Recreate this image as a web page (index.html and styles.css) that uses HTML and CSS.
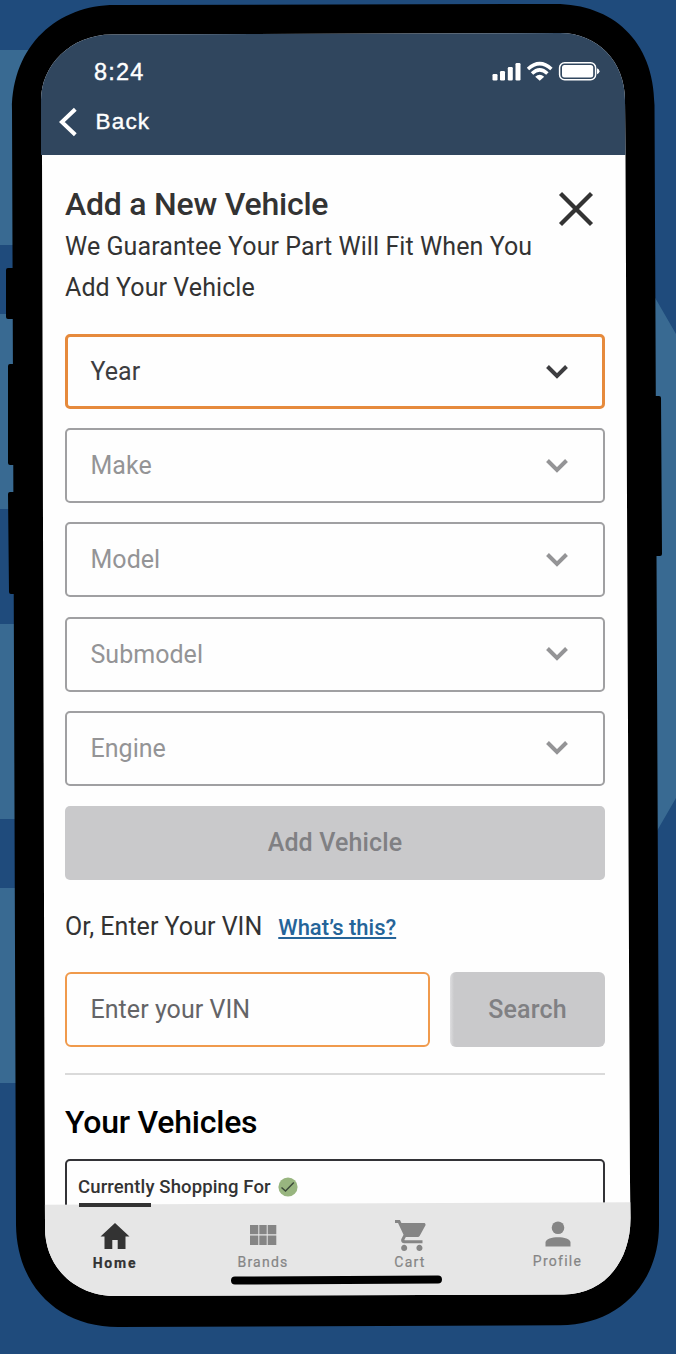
FILE: index.html
```html
<!DOCTYPE html>
<html lang="en">
<head>
<meta charset="utf-8">
<title>Add a New Vehicle</title>
<link rel="stylesheet" href="styles.css">
</head>
<body>
<svg class="backdrop" width="676" height="1354" viewBox="0 0 676 1354" aria-hidden="true">
  <rect width="676" height="1354" fill="#1f4b7c"/>
  <path fill="#396a92" d="M0 50H30V245H0zM0 314H30V509H0zM0 624H30V819H0zM0 888H30V1083H0zM650 289L676 334V798L650 843z"/>
  <path d="M115 5L555 4C612 4 654 40 654.500 105L659 1120V1225C659 1284 618 1325 560 1325.300L118 1327C60 1327 17 1288 16 1225L12 110C12 45 58 5 115 5z"/>
  <path d="M14 268H8q-2 0-2 2V317q0 2 2 2H14zM15 364H10q-2 0-2 2V463q0 2 2 2H16zM16 492H10q-2 0-2 2L9 592q0 2 2 2H17zM650 396H659q2 0 2 2L662 554q0 2-2 2H650z"/>
</svg>

<div class="screen">
  <header class="topbar">
    <div class="status">
      <span class="time">8:24</span>
      <svg width="110" height="22" viewBox="0 0 110 22" fill="#fff">
        <rect x="1.500" y="14" width="5" height="6.500" rx="1.200"/>
        <rect x="9" y="11" width="5" height="9.500" rx="1.200"/>
        <rect x="16.800" y="7" width="5" height="13.500" rx="1.200"/>
        <rect x="24.500" y="3" width="5" height="17.500" rx="1.200"/>
        <g fill="none" stroke="#fff" stroke-width="3.500">
          <path d="M37 9Q48.700-1.800 60.400 9"/>
          <path d="M41 13.600Q48.700 6.200 56.400 13.600"/>
        </g>
        <path d="M44.200 16.800Q48.700 12.800 53.200 16.800L48.700 20.700z"/>
        <rect x="68.600" y="2.700" width="36" height="17" rx="5" fill="none" stroke="#fff" stroke-width="1.500"/>
        <rect x="71" y="5.100" width="31.200" height="12.300" rx="2.500"/>
        <path d="M106 8.300q2.500 1 2.500 3t-2.500 3z"/>
      </svg>
    </div>
    <div class="back">
      <svg width="18" height="30" viewBox="0 0 18 30" fill="none" stroke="#fff" stroke-width="4"><path d="M16.300 2.200L2.800 15L16.300 27.800"/></svg>
      <span>Back</span>
    </div>
  </header>

  <main class="content">
    <div class="heading">
      <div>
        <h1>Add a New Vehicle</h1>
        <p>We Guarantee Your Part Will Fit When You<br>Add Your Vehicle</p>
      </div>
      <svg class="close" width="36" height="36" viewBox="0 0 36 36" fill="none" stroke="#333" stroke-width="4.300"><path d="M2.500 2.500L33.500 33.500M33.500 2.500L2.500 33.500"/></svg>
    </div>

    <div class="fields">
      <div class="select active"><span>Year</span><svg class="chevron" viewBox="0 0 22 14"><path d="M1.500 1.500L11 11L20.500 1.500"/></svg></div>
      <div class="select"><span>Make</span><svg class="chevron" viewBox="0 0 22 14"><path d="M1.500 1.500L11 11L20.500 1.500"/></svg></div>
      <div class="select"><span>Model</span><svg class="chevron" viewBox="0 0 22 14"><path d="M1.500 1.500L11 11L20.500 1.500"/></svg></div>
      <div class="select"><span>Submodel</span><svg class="chevron" viewBox="0 0 22 14"><path d="M1.500 1.500L11 11L20.500 1.500"/></svg></div>
      <div class="select"><span>Engine</span><svg class="chevron" viewBox="0 0 22 14"><path d="M1.500 1.500L11 11L20.500 1.500"/></svg></div>
      <div class="button add"><span>Add Vehicle</span></div>
    </div>

    <div class="vin-label"><span>Or, Enter Your VIN</span><a>What’s this?</a></div>
    <div class="vin-row">
      <div class="vin-input"><span>Enter your VIN</span></div>
      <div class="button search"><span>Search</span></div>
    </div>

    <h2><span>Your Vehicles</span></h2>
    <div class="card">
      <span>Currently Shopping For</span>
      <svg width="20" height="20" viewBox="0 0 20 20"><circle cx="10" cy="10" r="9.600" fill="#98b57f"/><path d="M3.500 10.500L7.500 14L15.800 5.500" fill="none" stroke="#3c4a3a" stroke-width="1.500"/></svg>
    </div>
  </main>

  <nav class="tabs">
    <div class="tab home">
      <svg width="30" height="28" viewBox="0 0 30 28" fill="#333"><path d="M15 1L29.500 14.500H25.500V27H17.700V18H12.300V27H4.500V14.500H.500z"/></svg>
      <span>Home</span>
    </div>
    <div class="tab brands">
      <svg width="28" height="22" viewBox="0 0 28 22" fill="#858585"><path d="M1 1H9.300V10.200H1zM10.300 1H17.700V10.200H10.300zM18.700 1H27.300V10.200H18.700zM1 11.500H9.300V21H1zM10.300 11.500H17.700V21H10.300zM18.700 11.500H27.300V21H18.700z"/></svg>
      <span>Brands</span>
    </div>
    <div class="tab cart">
      <svg width="31" height="31" viewBox="1 2 20.300 20" preserveAspectRatio="none" fill="#858585"><path d="M7 18c-1.100 0-1.990.9-1.990 2S5.900 22 7 22s2-.9 2-2-.9-2-2-2zM1 2v2h2l3.600 7.590-1.350 2.450c-.16.280-.250.610-.250.960 0 1.100.9 2 2 2h12v-2H7.420c-.140 0-.250-.110-.250-.250l.030-.120.900-1.630h7.450c.750 0 1.410-.410 1.750-1.030l3.580-6.490c.080-.140.120-.310.120-.480 0-.550-.450-1-1-1H5.210l-.940-2H1zm16 16c-1.100 0-1.990.9-1.990 2s.890 2 1.990 2 2-.9 2-2-.9-2-2-2z"/></svg>
      <span>Cart</span>
    </div>
    <div class="tab profile">
      <svg width="26" height="26" viewBox="0 0 26 26" fill="#858585"><circle cx="13" cy="6.700" r="6.300"/><path d="M.500 25.500V21.500C.500 18 7 16.200 13 16.200S25.500 18 25.500 21.500V25.500z"/></svg>
      <span>Profile</span>
    </div>
  </nav>
</div>
<div class="card-accent"></div>
<div class="home-indicator"></div>
</body>
</html>
```

FILE: styles.css
```css
* { box-sizing: border-box; }

body {
  position: relative;
  width: 676px;
  height: 1354px;
  margin: 0;
  overflow: hidden;
  font-family: Roboto, sans-serif;
  color: #333;
}

svg { display: block; flex: none; }

.backdrop { position: absolute; inset: 0; z-index: -1; }

.screen {
  display: flex;
  flex-direction: column;
  width: 676px;
  height: 1297px;
  background: #fefefe;
  clip-path: path("M112 34.500L560 33C598 33 625 62 625 100L625.500 155L630 1180L630.500 1218C630.500 1264 602 1294.500 564 1294.500L115 1296C76 1296 45 1268 45 1228L44.500 1090L42 155H41V100C41 66 70 34.500 112 34.500z");
}

.topbar {
  height: 155px;
  padding: 60px 75px 0 59px;
  background: #30465e;
  color: #fff;
  font-family: "Liberation Sans", Arial, sans-serif;
}

.status { display: flex; justify-content: space-between; height: 24px; padding-left: 35px; }
.time { font-size: 23.500px; line-height: 25px; letter-spacing: 1.200px; -webkit-text-stroke: .4px #fff; }
.back { display: flex; align-items: center; gap: 18.500px; margin-top: 23px; }
.back span { font-size: 22.500px; line-height: 30px; letter-spacing: 1.200px; -webkit-text-stroke: .4px #fff; }

.content { flex: none; width: 540px; height: 1047px; margin-left: 65px; padding-top: 29px; }

.heading { display: flex; justify-content: space-between; height: 150px; padding-right: 11px; }
.close { margin-top: 7px; }
h1 { margin: 0; font-size: 32px; font-weight: 500; line-height: 41px; letter-spacing: -.22px; }
.heading p { margin: 1px 0 0; font-size: 25px; line-height: 41px; letter-spacing: .08px; white-space: nowrap; }

.fields { display: grid; grid-auto-rows: 75px; gap: 19.200px; }
.select {
  display: flex;
  align-items: center;
  justify-content: space-between;
  padding: 0 35px 0 23.500px;
  border: 2px solid #a0a0a2;
  border-radius: 5px;
  font-size: 25px;
  letter-spacing: .03px;
  color: #949496;
}
.select.active { padding: 0 34px 0 22.500px; border: 3px solid #e68a3c; color: #3d3d40; }
.chevron { width: 22px; height: 14px; fill: none; stroke: #949496; stroke-width: 4; }
.active .chevron { stroke: #3d3d40; }

.button {
  display: flex;
  align-items: center;
  justify-content: center;
  border-radius: 5px;
  background: #c9c9cb;
  font-size: 25px;
  font-weight: 500;
  letter-spacing: .15px;
  color: #808083;
}
.add { margin-top: 1px; padding-bottom: 1px; }

.vin-label { display: flex; gap: 16px; align-items: baseline; height: 92px; padding-top: 27px; font-size: 25px; line-height: 40px; letter-spacing: .02px; }
.vin-label a { font-size: 22px; font-weight: 500; letter-spacing: 0; color: #256499; text-decoration: underline; text-decoration-thickness: 2px; text-underline-offset: 2px; }
.vin-row { display: grid; grid-template-columns: 365px 155px; gap: 20px; height: 75px; }
.vin-input { display: flex; align-items: center; padding-left: 23.500px; border: 2px solid #f09a4c; border-radius: 6px; font-size: 25px; letter-spacing: .05px; color: #646467; }
.search { border-radius: 6px; background: linear-gradient(90deg, #dedee0, #c9c9cb 4px); }

h2 { margin: 26px 0 0; padding-top: 26px; border-top: 2px solid #dadada; font-size: 32px; font-weight: 500; line-height: 42px; letter-spacing: -.23px; color: #000; }
.card {
  display: flex;
  gap: 7px;
  height: 80px;
  margin-top: 16px;
  padding: 16px 11px;
  border: 2px solid #333337;
  border-radius: 5px;
  font-size: 18.500px;
  font-weight: 500;
  line-height: 20px;
  letter-spacing: .13px;
}

.tabs {
  position: relative;
  display: grid;
  grid-template-columns: 142px 152px 142px 154px;
  flex: none;
  height: 95px;
  padding-left: 44px;
  background: #e6e6e6;
  clip-path: polygon(0 3px, 676px 0, 676px 95px, 0 95px);
  font-size: 14px;
  font-weight: 400;
  line-height: 18px;
  letter-spacing: 1.250px;
  -webkit-text-stroke: .2px;
  color: #858585;
}
.tab { display: flex; flex-direction: column; align-items: center; }
.home { padding-top: 20px; color: #333; font-weight: 700; letter-spacing: 1.800px; }
.home span { margin-top: 4px; }
.brands { padding: 22px 0 0 2px; }
.brands span { margin-top: 7px; }
.cart { padding: 18px 0 0 2px; }
.cart span { margin-top: 2px; }
.profile { padding: 19px 0 0 1px; }
.profile span { margin-top: 5px; }

.card-accent { position: absolute; left: 79px; top: 1203px; width: 72px; height: 3.500px; background: #333; }
.home-indicator { position: absolute; left: 231px; top: 1276px; width: 211px; height: 8px; border-radius: 4px; background: #000; transform: rotate(-.3deg); }
```
